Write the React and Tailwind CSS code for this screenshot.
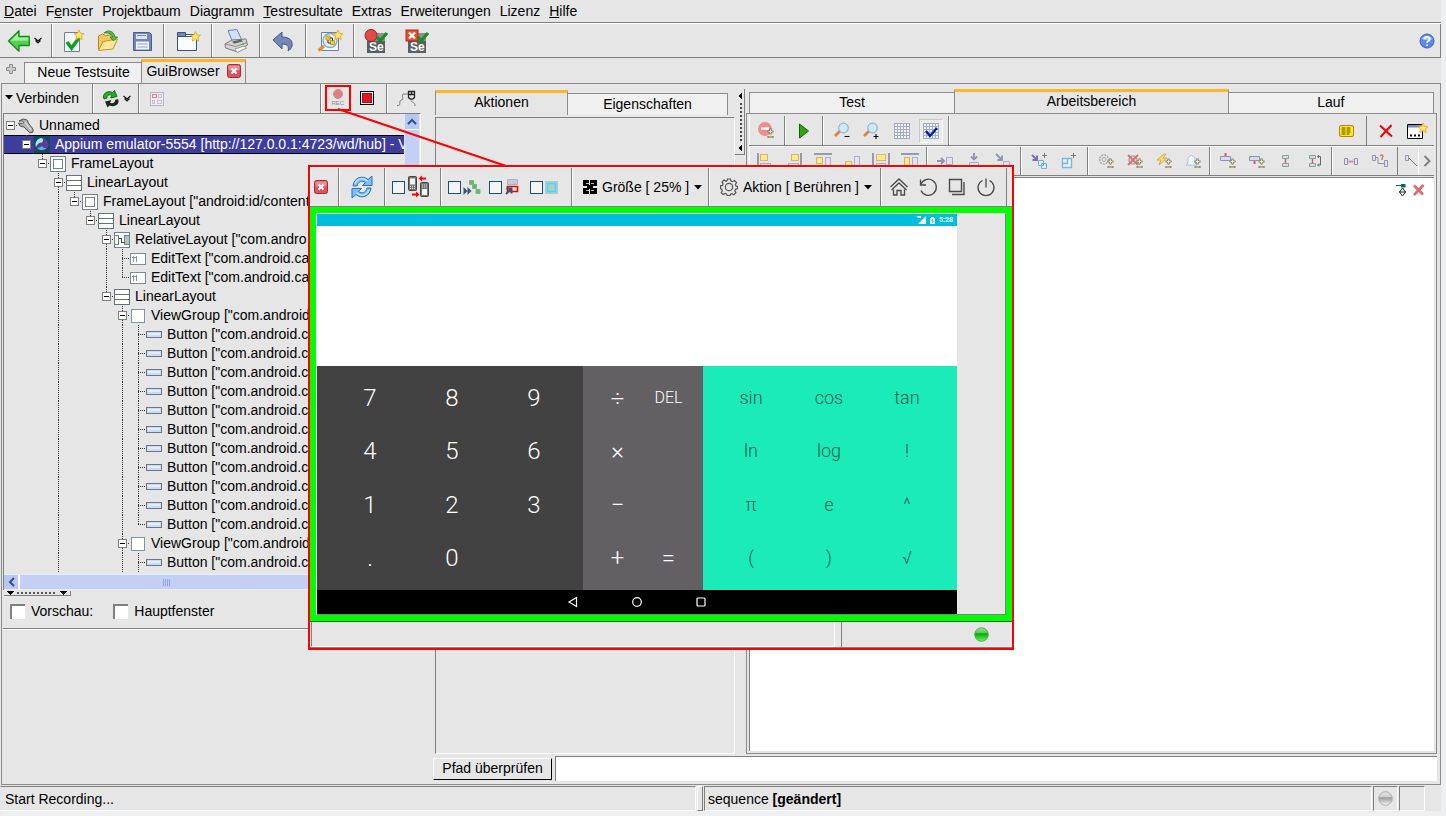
import React from "react";

/* ---------- drawing helpers ---------- */
function Svg({ w = 24, h = 24, children, crisp }) {
  return (
    <svg width={w} height={h} viewBox={`0 0 ${w} ${h}`} fill="none" className="block shrink-0" aria-hidden="true" shapeRendering={crisp ? "crispEdges" : "auto"}>
      {children}
    </svg>
  );
}

const starPoints = "0,-5 1.5,-1.7 5,-1.3 2.4,1 3.2,4.6 0,2.8 -3.2,4.6 -2.4,1 -5,-1.3 -1.5,-1.7";
const Star = ({ x, y }) => <polygon points={starPoints} transform={`translate(${x} ${y})`} fill="#ffe566" stroke="#d9a520" strokeWidth="0.8" />;
const PlusMinus = ({ x, y }) => (
  <g transform={`translate(${x} ${y})`}>
    <path d="M3.500 0.500v6M0.500 3.500h6M0.500 9h6" stroke="#77775c" strokeWidth="2.200" />
    <path d="M3.500 1.500v4M1.500 3.500h4M1.500 9h4" stroke="#f3e9a6" strokeWidth="1" />
  </g>
);
const Caret = () => (
  <Svg w={8} h={5}><path d="M0 0h8L4 4.500z" fill="#000" /></Svg>
);
const DoubleChevron = () => (
  <Svg w={8} h={8}><path d="M0.500 1L4 4l3.500-3M1.500 3.500L4 6l2.500-2.500" stroke="#111" strokeWidth="1.200" /></Svg>
);

/* ---------- main toolbar icons ---------- */
const BackIcon = () => (
  <Svg w={24}>
    <path d="M1.500 12L12 1.800V7.500h10.200v9H12v5.700z" fill="#4fd34f" stroke="#158a15" strokeWidth="1.300" strokeLinejoin="round" />
    <path d="M3.500 11.800L11 4.600v4h10.200v3z" fill="#a5f0a0" />
  </Svg>
);
const NewTestIcon = () => (
  <Svg w={24}>
    <path d="M3.500 3.500h15v19h-15z" fill="#f5f8ff" stroke="#6f80b0" />
    <path d="M6 13l4.500 6L18 9" stroke="#0aa31c" strokeWidth="3.600" />
    <Star x={18} y={6} />
  </Svg>
);
const OpenIcon = () => (
  <Svg w={24}>
    <path d="M2.500 20.500V7l4-2 3 1.500 8-1V11" fill="#f2c95c" stroke="#b98520" />
    <path d="M2.500 21.500L7 12.500l14.500-2.500-4.500 10z" fill="#ffe696" stroke="#c79324" />
    <path d="M8 4c4-4 10-2 11 4h2.500L17.500 12 14 8h2.500C16 5 13 3.500 8 4z" fill="#4fc24a" stroke="#1d7d1d" strokeWidth="0.800" />
  </Svg>
);
const SaveIcon = () => (
  <Svg w={24}>
    <path d="M2.500 3.500h16l2 2v16h-18z" fill="#7186bf" stroke="#4a5d96" />
    <path d="M5 5h11v5H5z" fill="#dfe6f6" />
    <path d="M6 6.500h9" stroke="#7186bf" />
    <path d="M5 12.500h13v8H5z" fill="#eef2fb" />
    <path d="M6.500 15h10M6.500 18h10" stroke="#93a3cd" />
  </Svg>
);
const NewWindowIcon = () => (
  <Svg w={26}>
    <path d="M2.500 5.500h19v16h-19z" fill="#fbfcff" stroke="#3d4f86" />
    <path d="M2.500 3.500h8v4h-8z" fill="#7186bf" stroke="#3d4f86" />
    <path d="M10 7.500h11.500" stroke="#3d4f86" />
    <Star x={20.500} y={7.500} />
  </Svg>
);
const PrinterIcon = () => (
  <Svg w={26}>
    <path d="M5 1.500l9-1 5 11-9 2.500z" fill="#cfe0ff" stroke="#6f80b0" />
    <path d="M2 15l7-4 14-1 1.500 6L13 22.500 2.500 19z" fill="#d4d4d4" stroke="#7b7b7b" />
    <path d="M2 15l11 2.500 11-4" stroke="#8d8d8d" />
    <path d="M9 12.500l9-2 2 2-9 2.300z" fill="#666" />
    <path d="M12 20l9-3 2.500 2L14 23.500z" fill="#f8f8f8" stroke="#999" />
    <circle cx="20" cy="15" r="1" fill="#3fbf3f" />
  </Svg>
);
const UndoIcon = () => (
  <Svg w={24}>
    <path d="M2 11L11 3v5c8 0 11 4 10 9-0.500 2-2 4-4 5 1.500-5-1-7-6-7v5z" fill="#7387b8" stroke="#45578c" strokeLinejoin="round" />
  </Svg>
);
const SearchDocIcon = () => (
  <Svg w={28} h={24}>
    <path d="M5.500 3.500h17v18h-17z" fill="#f2f6ff" stroke="#6f80b0" />
    <path d="M8 17l-5.500 4.500" stroke="#e58a2c" strokeWidth="3" />
    <circle cx="14" cy="11.500" r="7" fill="#e2f3ff" stroke="#7ea9d9" strokeWidth="1.400" />
    <path d="M10 7h4v4h-4zM14.500 11.500h4v4h-4z" fill="#ffcb1f" stroke="#c18900" strokeWidth="0.800" />
    <path d="M14 9h2.500v2.500M12 11v3h2.500" stroke="#333" />
    <Star x={22} y={6} />
  </Svg>
);
const SeIcon = ({ stop }) => (
  <Svg w={26}>
    <rect x="4" y="4" width="18" height="20" fill="#5c5f61" />
    <rect x="4" y="4" width="18" height="8" fill="#8c9194" />
    <text x="6" y="22" fontFamily="Liberation Sans, sans-serif" fontWeight="bold" fontSize="12" fill="#fff">Se</text>
    {stop ? (
      <g>
        <rect x="2" y="1" width="12" height="11" fill="#e6502f" stroke="#b32414" />
        <path d="M5 3.500l6 6M11 3.500l-6 6" stroke="#fff" strokeWidth="2.200" />
      </g>
    ) : (
      <circle cx="8" cy="6.500" r="6" fill="#e24a4a" stroke="#a81d1d" />
    )}
    <path d="M14 8l3 4 7-8" stroke="#158f22" strokeWidth="3" />
  </Svg>
);
const HelpIcon = () => (
  <Svg w={16} h={16}>
    <circle cx="8" cy="8" r="7" fill="#5b8bea" stroke="#3b64c4" />
    <path d="M2.500 6a6 5 0 0 1 11 0q-5.500 2-11 0z" fill="#a5c3fa" />
    <path d="M5.500 6.200a2.500 2.300 0 1 1 3.700 1.900Q8 8.700 8 10M8 11.500v1.600" stroke="#fff" strokeWidth="1.700" />
  </Svg>
);
const CloseIcon = () => (
  <Svg w={14} h={14}>
    <rect x="0.500" y="0.500" width="13" height="13" rx="2" fill="#d9525c" stroke="#b02a36" />
    <rect x="1.500" y="1.500" width="11" height="5" rx="1" fill="#ec8f95" />
    <path d="M4.500 4.500l5 5M9.500 4.500l-5 5" stroke="#fff" strokeWidth="2.200" />
  </Svg>
);

/* ---------- browser toolbar icons ---------- */
const RefreshGreen = () => (
  <Svg w={18} h={18}>
    <path d="M2 9C-0.500 3.500 6 0 10.500 2.500L12.500 0.500 15 6.500 8.500 8 10 5.300C7.500 4 4.500 5.500 5 8z" fill="#1fb51f" stroke="#064d06" strokeWidth="0.800" />
    <path d="M16 9C18.500 14.500 12 18 7.500 15.500L5.500 17.500 3 11.500 9.500 10 8 12.700C10.500 14 13.500 12.500 13 10z" fill="#1b2b1b" />
  </Svg>
);
const ComponentGrid = () => (
  <Svg w={14} h={14} crisp>
    <path d="M0.500 0.500h13v13H0.500z" fill="#f0ecf2" stroke="#b9b4cc" />
    <path d="M2.500 2.500h4v3h-4z" stroke="#ee7c7c" />
    <path d="M8.500 2.500h3v3h-3zM2.500 8.500h2v3h-2zM7.500 8.500h4v3h-4z" stroke="#c9bfd6" />
  </Svg>
);
const RecIcon = () => (
  <Svg w={20} h={20}>
    <circle cx="10" cy="6" r="4.500" fill="#e77c7c" stroke="#bb9a9a" />
    <text x="3.500" y="17" fontFamily="Liberation Sans, sans-serif" fontSize="6" fill="#888">REC</text>
  </Svg>
);
const StopIcon = () => (
  <Svg w={14} h={14} crisp>
    <path d="M0.500 0.500h13v13H0.500z" fill="#fff" stroke="#000" />
    <path d="M2 2h10v10H2z" fill="#b00a14" />
    <path d="M3 3h8v8H3z" fill="#e5141e" />
  </Svg>
);
const MouseIcon = () => (
  <Svg w={22} h={18}>
    <path d="M1 15.500c5 1 1-5 4.500-5.500S4 4 8 4h4" stroke="#777" />
    <path d="M12.500 1.500h6v6q-3 3.500-6 0zM12.500 4.500h6M15.500 1.500v3" stroke="#222" strokeWidth="1.300" />
    <path d="M15.500 9.500c-2 3 4 2 3.500 6.500" stroke="#777" />
  </Svg>
);

/* ---------- tree icons ---------- */
const treeIcons = {
  wrench: (
    <Svg w={16} h={16}>
      <path d="M1 3l4-2 4 1 2 4 4 5v3l-3 1-6-6-4-1-1.500-3 4 0.500L6 4.500 4.500 3z" fill="#b4b4b4" stroke="#444" strokeWidth="0.900" />
      <path d="M7 4l6 8" stroke="#eee" />
    </Svg>
  ),
  appium: (
    <Svg w={16} h={17}>
      <path d="M0 0h16v17H0z" fill="#114a58" />
      <circle cx="8" cy="8.500" r="6.500" fill="#5b3aa0" />
      <path d="M8 2A6.500 6.500 0 0 0 2 11q2-5 6-4.500 2-2 0-4.500z" fill="#9ef0f0" />
      <path d="M3 12a6.500 6.500 0 0 0 10-0.500q-4 1.500-5-1.500-2 2-5 2z" fill="#42c6d6" />
    </Svg>
  ),
  frame: (
    <Svg w={16} h={16} crisp>
      <path d="M0.500 0.500h15v15H0.500z" fill="#fffffa" stroke="#6f8390" />
      <path d="M3.500 3.500h9v9h-9z" stroke="#6f8390" />
    </Svg>
  ),
  linear: (
    <Svg w={16} h={16} crisp>
      <path d="M0.500 0.500h15v15H0.500zM0 5.500h16M0 10.500h16" fill="#fffffa" stroke="#5f7480" />
    </Svg>
  ),
  relative: (
    <Svg w={16} h={16} crisp>
      <path d="M0.500 0.500h15v15H0.500z" fill="#fffffa" stroke="#6f8390" />
      <path d="M0.500 3.500h4v9h-4z" stroke="#6f8390" fill="#f5f5e8" />
      <path d="M10.500 3.500h5v9h-5z" fill="#b8bfc2" stroke="#6f8390" />
      <path d="M5 6.500h2.500v4h3" stroke="#444" />
    </Svg>
  ),
  edit: (
    <Svg w={16} h={12} crisp>
      <path d="M0.500 0.500h15v11H0.500z" fill="#fff" stroke="#7b8c98" />
      <path d="M3.500 3v6M2 4.500h4M6.500 3v6" stroke="#8896a0" />
    </Svg>
  ),
  group: (
    <Svg w={16} h={14} crisp><path d="M1.500 0.500h13v13h-13z" fill="#fffffa" stroke="#7c94a4" /></Svg>
  ),
  button: (
    <Svg w={16} h={7} crisp>
      <path d="M0.500 0.500h15v6H0.500z" fill="#cbdcf2" stroke="#6a7684" />
      <path d="M2 2h12v2H2z" fill="#e4eefb" />
    </Svg>
  ),
};

const buttonRow = [8, "button", 'Button ["com.android.c', false, true, [3, 7]];
/* depth, icon, label, has children, has next sibling, guide columns */
const rows = [
  [0, "wrench", "Unnamed", true, false, []],
  [1, "appium", "Appium emulator-5554 [http://127.0.0.1:4723/wd/hub] - V", true, false, []],
  [2, "frame", "FrameLayout", true, false, []],
  [3, "linear", "LinearLayout", true, true, []],
  [4, "frame", 'FrameLayout ["android:id/content', true, false, [3]],
  [5, "linear", "LinearLayout", true, false, [3]],
  [6, "relative", 'RelativeLayout ["com.andro', true, true, [3]],
  [7, "edit", 'EditText ["com.android.ca', false, true, [3, 6]],
  [7, "edit", 'EditText ["com.android.ca', false, false, [3, 6]],
  [6, "linear", "LinearLayout", true, false, [3]],
  [7, "group", 'ViewGroup ["com.android', true, true, [3]],
  ...Array(10).fill(buttonRow),
  [8, "button", 'Button ["com.android.c', false, false, [3, 7]],
  [7, "group", 'ViewGroup ["com.android', true, true, [3]],
  buttonRow,
];

function TreeRow({ row, selected, index }) {
  const [depth, icon, label, open, next, guides] = row;
  const joint = (
    <Svg w={14} h={19} crisp>
      {depth > 0 && <path d="M6.500 0v10" stroke="#333" strokeDasharray="1 1" />}
      {next && <path d="M6.500 10v9" stroke="#333" strokeDasharray="1 1" />}
      <path d="M6 9.500h8" stroke="#333" strokeDasharray="1 1" />
      {open && <path d="M2.500 5.500h8v8h-8z" fill="#fff" stroke="#808080" />}
      {open && <path d="M4 9.500h5" stroke="#000" />}
    </Svg>
  );
  return (
    <li
      role="treeitem"
      aria-level={depth + 1}
      aria-selected={selected}
      className={"flex h-[19px] items-center whitespace-nowrap " + (selected ? "border-y border-black bg-[#3e3d9d] text-white" : "")}
    >
      {Array.from({ length: depth }, (_, l) => (
        <Svg key={l} w={16} h={19} crisp>
          {guides.includes(l) && <path d="M6.500 0v19" stroke="#333" strokeDasharray="1 1" />}
        </Svg>
      ))}
      {open ? <button aria-label={"Zuklappen " + index} className="shrink-0">{joint}</button> : joint}
      <span className="flex w-4 shrink-0 justify-center">{treeIcons[icon]}</span>
      <span className="pb-[2px] pl-[5px]">{label}</span>
    </li>
  );
}

/* ---------- workspace toolbar icons ---------- */
const MinusIcon = () => (
  <Svg w={20} h={20}>
    <circle cx="8" cy="8" r="7" fill="#f08d8d" />
    <path d="M4 7.500h8" stroke="#fff" strokeWidth="2.500" />
    <PlusMinus x={10} y={7} />
  </Svg>
);
const PlayIcon = () => (
  <Svg w={12} h={16}><path d="M1.500 1l9 7-9 7z" fill="#2fa80f" stroke="#175e08" /></Svg>
);
const ZoomIcon = ({ plus }) => (
  <Svg w={18} h={18}>
    <path d="M8 8l-6 6" stroke="#e0843a" strokeWidth="2.800" />
    <circle cx="10.500" cy="6" r="4.800" fill="#cdeafc" stroke="#8fb6d8" strokeWidth="1.200" />
    <path d={plus ? "M11.500 14.500h5M14 12v5" : "M11.500 14.500h5"} stroke="#000" strokeWidth="1.100" />
  </Svg>
);
const GridIcon = ({ check }) => (
  <Svg w={18} h={18} crisp={!check}>
    <path d="M1 1h16v16H1z" fill="#f4f6ff" />
    <path d="M1.500 1v16M4.500 1v16M7.500 1v16M10.500 1v16M13.500 1v16M16.500 1v16M1 1.500h16M1 4.500h16M1 7.500h16M1 10.500h16M1 13.500h16M1 16.500h16" stroke="#a3aacf" />
    {check && <path d="M4 9l4 5 7-8" stroke="#0b1f9c" strokeWidth="2.400" />}
  </Svg>
);
const NoteIcon = () => (
  <Svg w={15} h={12}>
    <rect x="0.500" y="0.500" width="14" height="11" rx="1.500" fill="#ffec1f" stroke="#c97a1a" />
    <path d="M2.500 3h10M2.500 5h10M2.500 7h10M2.500 9h8" stroke="#5a4f00" strokeDasharray="4 1" />
  </Svg>
);
const RedX = ({ soft }) => (
  <Svg w={14} h={14}><path d={soft ? "M2 2.500l9 9M11.500 2L2 12" : "M1 1.500l12 11M12.500 1L1.500 13"} stroke={soft ? "#e06b6b" : "#f00000"} strokeWidth={soft ? 2.600 : 2} /></Svg>
);
const DialogStarIcon = () => (
  <Svg w={22} h={18}>
    <path d="M1.500 2.500h15v14h-15z" fill="#fff" stroke="#000" />
    <path d="M2 3h14v2.500H2z" fill="#7488bd" />
    <path d="M4 13.500h2M8 13.500h2M12 13.500h2" stroke="#000" strokeWidth="2" />
    <Star x={17} y={6} />
  </Svg>
);
const Align = ({ d, y, b }) => (
  <Svg w={18} h={16} crisp>
    <path d={b} fill="#dfe3f2" stroke="#aab0cc" />
    <path d={y} fill="#ffe98a" stroke="#d9b36a" />
    <path d={d} stroke="#9898b0" strokeWidth="2" />
  </Svg>
);
const alignIcons = [
  <Align d="M2 0v16" y="M4.500 1.500h7v6h-7z" b="M4.500 10.500h10v4h-10z" />,
  <Align d="M16 0v16" y="M6.500 1.500h7v6h-7z" b="M3.500 10.500h10v4h-10z" />,
  <Align d="M0 1h18" y="M2.500 4.500h6v6h-6z" b="M11.500 4.500h5v11h-5z" />,
  <Align d="M0 16h18" y="M2.500 8.500h6v6h-6z" b="M11.500 3.500h5v11h-5z" />,
  <Align d="M1 0v16M17 0v16" y="M4.500 1.500h9v6h-9z" b="M4.500 10.500h9v4h-9z" />,
  <Align d="M0 1h18" y="M3.500 4.500h5v11h-5z" b="M11.500 4.500h5v11h-5z" />,
];
const Line = ({ children }) => <Svg w={20} h={18}>{children}</Svg>;
const moveIcons = [
  <Line><path d="M2 9h7M6 6l3 3-3 3" stroke="#8f93ad" strokeWidth="1.800" /><path d="M11.500 5.500h6v7h-6z" fill="#dfe3f2" stroke="#a3abc9" /></Line>,
  <Line><path d="M10 1v6M7 4.500l3 3 3-3" stroke="#8f93ad" strokeWidth="1.800" /><path d="M5.500 10.500h9v5h-9z" fill="#dfe3f2" stroke="#a3abc9" /></Line>,
  <Line><path d="M3 2l6 6M9 3.500V8H4.500" stroke="#8f93ad" strokeWidth="1.800" /><path d="M10.500 9.500h6v6h-6z" fill="#dfe3f2" stroke="#a3abc9" /></Line>,
];
const sizeIcons = [
  <Line><path d="M2 3l5 5M7 3.500V8H2.500" stroke="#7a6fc0" strokeWidth="2" /><path d="M8.500 8.500h5v5h-5zM11.500 11.500h5v5h-5z" fill="#dff0ff" stroke="#6faee0" /><path d="M14.500 1v5M12 3.500h5" stroke="#777" /></Line>,
  <Line><path d="M3.500 6.500h9v9h-9zM3.500 11.500h5v-5" fill="#e8f4ff" stroke="#7db4e2" strokeWidth="1.400" /><path d="M14.500 1v5M12 3.500h5" stroke="#777" /></Line>,
];
const createIcons = [
  <Line><circle cx="8" cy="7.500" r="4.500" stroke="#a9a9a9" strokeWidth="1.500" strokeDasharray="2 1" /><circle cx="8" cy="7.500" r="2" stroke="#a9a9a9" /><PlusMinus x={11} y={6} /></Line>,
  <Line><circle cx="8" cy="8" r="4" stroke="#b5a5a5" strokeWidth="1.500" /><path d="M3 3l10 10M13 3L3 13" stroke="#d96f78" strokeWidth="2" /><PlusMinus x={11} y={6} /></Line>,
  <Line><path d="M10 2L3 8h4l-2 5 8-7H9l3-4z" fill="#ffe277" stroke="#d7a84d" /><PlusMinus x={11} y={6} /></Line>,
  <Line><path d="M5 11V6q3.500-5 7 0v5l2 2H3z" fill="#f2f8ff" stroke="#a6c4e2" /><PlusMinus x={11} y={6} /></Line>,
];
const nodeIcons = [
  <Line><path d="M2.500 4.500h10v4h-10z" fill="#d8dcee" stroke="#8f93ad" /><path d="M7.500 1v3" stroke="#e05a6a" strokeWidth="2" /><PlusMinus x={11} y={6} /></Line>,
  <Line><path d="M2.500 4.500h10v4h-10z" fill="#d8dcee" stroke="#8f93ad" /><path d="M7.500 9v3" stroke="#e05a6a" strokeWidth="2" /><PlusMinus x={11} y={6} /></Line>,
  <Line><path d="M6.500 3.500h6v3h-6zM6.500 11.500h6v3h-6z" fill="#cfe0de" stroke="#86a09c" /><path d="M9.500 7v4" stroke="#e05a6a" strokeWidth="1.500" /></Line>,
  <Line><path d="M4.500 3.500h6v3h-6zM4.500 11.500h6v3h-6z" fill="#cfe0de" stroke="#86a09c" /><path d="M7.500 7v4" stroke="#e05a6a" strokeWidth="1.500" /><path d="M13 4.500h2.500v8.500H13M14 3l-1.500 1.500L14 6M14 11.500L12.500 13l1.500 1.500" stroke="#666" /></Line>,
];
const linkIcons = [
  <Line><path d="M3.500 6.500h3v6h-3zM13.500 6.500h3v6h-3z" fill="#dfe3f2" stroke="#8f93ad" /><path d="M8 7.500l4 4M12 7.500l-4 4M7 9.500h6" stroke="#e08a93" /></Line>,
  <Line><path d="M2.500 3.500h3v5h-3zM14.500 8.500h3v6h-3z" fill="#dfe3f2" stroke="#8f93ad" /><path d="M6 5.500h2v6h6" stroke="#8f93ad" /><path d="M10 4q3-2.500 3 0.500l-1 2v1.500" stroke="#dd6a78" strokeWidth="1.300" /></Line>,
];

/* ---------- device window icons ---------- */
const RefreshBlue = () => (
  <Svg w={24} h={24}>
    <path d="M3 11C4 2 13 0 18 4.500l4-3.500V10.500h-9.500l3-3C12 5 8 6.500 7 11z" fill="#7cc0f5" stroke="#2671c4" strokeLinejoin="round" />
    <path d="M21 13c-1 9-10 11-15 6.500L2 23V13.500h9.500l-3 3c3.500 2.500 7.500 1 8.500-3.500z" fill="#7cc0f5" stroke="#2671c4" strokeLinejoin="round" />
    <path d="M5 9C7 3.500 13 2 17.500 6M19 15c-2 5.500-8 7-12.500 3" stroke="#c4e6ff" strokeWidth="1.200" />
  </Svg>
);
const PhonesIcon = () => (
  <Svg w={24} h={24}>
    <rect x="1.500" y="1.500" width="8" height="14" rx="1" fill="#777" stroke="#444" /><path d="M3 3.500h5v6H3z" fill="#f4f4f4" />
    <path d="M3 11.500h5M3 13.500h5" stroke="#ddd" strokeDasharray="1 1" />
    <rect x="13.500" y="7.500" width="8" height="14" rx="1" fill="#777" stroke="#444" /><path d="M15 14h5v6h-5z" fill="#f4f4f4" />
    <path d="M15 10h5M15 12h5" stroke="#ddd" strokeDasharray="1 1" />
    <path d="M19 3.500h-6" stroke="#f00" strokeWidth="2" /><path d="M15 0.500v6L11.500 3.500z" fill="#f00" />
    <path d="M5 19.500h5" stroke="#f00" strokeWidth="2" /><path d="M9 16.500v6l3.500-3z" fill="#f00" />
  </Svg>
);
const ExpandIcon = () => (
  <Svg w={18} h={18}>
    <path d="M6.500 2.500h4v4h-4zM9.500 6.500h4v4h-4zM13 11.500h4v4h-4z" fill="#3fd33f" stroke="#8fa5a0" />
    <path d="M0.500 9l4 4-4 4zM4.500 9l4 4-4 4z" fill="#38566e" />
  </Svg>
);
const PickIcon = () => (
  <Svg w={14} h={16}>
    <path d="M2.500 0.500h10v5h-10z" fill="#c5cbd6" stroke="#aab4d0" />
    <path d="M2.500 7.500h10v5h-10z" stroke="#f00" strokeWidth="1.600" />
    <path d="M1 15l5-5M1.500 9.500H6.500v5" stroke="#38566e" strokeWidth="2" />
  </Svg>
);
const HighlightIcon = () => (
  <Svg w={13} h={13}>
    <rect width="13" height="13" fill="#c3c3c3" />
    <rect x="2.500" y="2.500" width="8" height="8" stroke="#10f0ff" strokeWidth="1.500" />
  </Svg>
);
const SizeIcon = () => (
  <Svg w={14} h={14} crisp>
    <path d="M0 0h6v6H0zM7 0h7v6H7zM0 8h6v6H0zM7 8h7v6H7zM4 5h6v4H4z" fill="#000" />
    <path d="M3 3.500h3M8 3.500h3M3 10.500h3M8 10.500h3" stroke="#bbb" />
  </Svg>
);
const GearIcon = () => (
  <Svg w={18} h={18}>
    <path d="M7.500 1h3l0.500 2 1.600 0.700 1.900-1.100 2 2-1.100 1.900L16 8l1.500 0.300v2.400l-2 0.500-0.700 1.600 1.100 1.900-2 2-1.900-1.100-1.500 0.700-0.400 1.200h-3l-0.500-1.400-1.500-0.600-1.900 1.100-2-2 1.100-1.900-0.700-1.500L0.500 10.500V7.800L2.500 7.400l0.600-1.500L2 4.100l2-2 1.900 1.100L7.200 2.600z" stroke="#555" strokeWidth="1.200" />
    <circle cx="9" cy="9" r="3.700" stroke="#555" strokeWidth="1.200" />
  </Svg>
);
const HomeIcon = () => (
  <Svg w={20} h={20}>
    <path d="M1.500 10L10 2l8.500 8M2.500 13L10 6l7.500 7M4.500 12.500V18H8v-4.500h4V18h3.500v-5.500" stroke="#4a4a4a" strokeWidth="1.300" />
  </Svg>
);
const RotateIcon = () => (
  <Svg w={20} h={20}><path d="M2.500 2.500v5.500h5.500M2.800 7.500A8 8 0 1 1 3 13.500" stroke="#4a4a4a" strokeWidth="1.300" /></Svg>
);
const RecentIcon = () => (
  <Svg w={20} h={20}><path d="M2.500 2.500h12v12h-12zM17 5v12.500H5" stroke="#4a4a4a" strokeWidth="1.400" /></Svg>
);
const PowerIcon = () => (
  <Svg w={20} h={20}><path d="M10 1.500v9M6.500 3.500a8 8 0 1 0 7 0" stroke="#4a4a4a" strokeWidth="1.300" /></Svg>
);
const Bulb = ({ green }) => (
  <Svg w={15} h={15}>
    <defs>
      <linearGradient id={green ? "bulb-green" : "bulb-gray"} x1="0" y1="0" x2="0" y2="1">
        <stop offset="0" stopColor={green ? "#8fe88f" : "#e8e8e8"} />
        <stop offset="0.350" stopColor={green ? "#55cf55" : "#cfcfcf"} />
        <stop offset="0.450" stopColor={green ? "#08a808" : "#9c9c9c"} />
        <stop offset="1" stopColor={green ? "#5cff5c" : "#f6f6f6"} />
      </linearGradient>
    </defs>
    <circle cx="7.500" cy="7.500" r="6.800" fill={green ? "url(#bulb-green)" : "url(#bulb-gray)"} stroke={green ? "#4a9a4a" : "#a5a5a5"} strokeWidth="0.800" />
  </Svg>
);

/* ---------- shared controls ---------- */
const IconButton = ({ label, className = "w-[35px]", children }) => (
  <button aria-label={label} className={"flex h-full shrink-0 items-center justify-center " + className}>{children}</button>
);
const Group = ({ className = "", children }) => (
  <div className={"flex shrink-0 items-center border-l border-r border-l-white border-r-[#808080] " + className}>{children}</div>
);
const UpperTab = ({ active, className = "", children }) => (
  <button
    role="tab"
    aria-selected={!!active}
    className={
      "border-x border-[#8c8c8c] text-center " +
      (active ? "h-[25px] border-t-3 border-t-[#fdb52d] bg-[#e6e6e6] pb-1 " : "h-[22px] border-y bg-[#f0f0f0] pb-[2px] ") + className
    }
  >
    {children}
  </button>
);
const SmallCheck = ({ label }) => (
  <input type="checkbox" aria-label={label} className="h-[13px] w-[13px] shrink-0 appearance-none border border-[#1c4d7c] bg-[#f4f4f2]" />
);

const menus = [["", "D", "atei"], ["F", "e", "nster"], ["Projektbaum", "", ""], ["Diagramm", "", ""], ["", "T", "estresultate"], ["Extras", "", ""], ["Erweiterungen", "", ""], ["Lizenz", "", ""], ["", "H", "ilfe"]];

/* ---------- device window ---------- */
const Key = ({ children, className = "" }) => (
  <button className={"flex items-center justify-center " + className}>{children}</button>
);

function DeviceWindow() {
  return (
    <section aria-label="Aufnahmefenster" className="absolute top-[165px] left-[308px] w-[706px] border-2 border-[#ff0000] bg-[#e6e6e6]">
      <div className="flex h-10 border-t border-b border-t-white border-b-[#808080]">
        <Group className="w-[29px] justify-center pr-2"><IconButton label="Schließen" className="w-5"><CloseIcon /></IconButton></Group>
        <Group className="w-[46px] justify-center"><IconButton label="Aktualisieren" className="w-8"><RefreshBlue /></IconButton></Group>
        <Group className="w-14 gap-[2px] pl-[6px]"><SmallCheck label="Automatisch aktualisieren" /><PhonesIcon /></Group>
        <Group className="w-[131px] pl-[6px]">
          <div className="flex w-[42px] items-center gap-[2px]"><SmallCheck label="Aufklappen" /><ExpandIcon /></div>
          <div className="flex w-[42px] items-center gap-[3px]"><SmallCheck label="Auswählen" /><PickIcon /></div>
          <div className="flex w-[42px] items-center gap-[2px]"><SmallCheck label="Hervorheben" /><HighlightIcon /></div>
        </Group>
        <Group className="w-[137px]">
          <button className="flex h-full w-full items-center gap-[5px] pl-[10px] whitespace-nowrap"><SizeIcon />Größe [ 25% ]<Caret /></button>
        </Group>
        <Group className="w-[172px]">
          <button className="flex h-full w-full items-center gap-[5px] pl-[10px] whitespace-nowrap"><GearIcon />Aktion [ Berühren ]<Caret /></button>
        </Group>
        <Group className="w-[126px] pl-[2px]">
          <IconButton label="Home" className="w-[29px]"><HomeIcon /></IconButton>
          <IconButton label="Zurück" className="w-[29px]"><RotateIcon /></IconButton>
          <IconButton label="Übersicht" className="w-[29px]"><RecentIcon /></IconButton>
          <IconButton label="Ein/Aus" className="w-[29px]"><PowerIcon /></IconButton>
        </Group>
      </div>
      <div className="border-6 border-[#00ff00]">
        <div className="flex border border-white border-r-[#808080] border-b-[#808080]">
          <div className="w-[640px] font-[Roboto,sans-serif]">
            <div className="flex h-3 items-center justify-end gap-1 bg-[#00bfdc] pr-1 text-[7px] leading-none font-bold text-white">
              <Svg w={9} h={8}><path d="M0 0h4v2H1M9 0v8H1z" fill="#fff" /></Svg>
              <Svg w={5} h={7}><path d="M0 1h1V0h3v1h1v6H0z" fill="#fff" /><path d="M3 2L1.500 4h2L2 6" stroke="#00bfdc" strokeWidth="0.800" /></Svg>
              <span>5:28</span>
            </div>
            <div className="h-[140px] bg-white" />
            <div className="flex h-56 font-light text-white">
              <div className="grid w-[266px] grid-cols-3 grid-rows-4 bg-[#424242] py-[5px] pr-2 pl-3 text-2xl leading-6">
                {["7", "8", "9", "4", "5", "6", "1", "2", "3", ".", "0"].map((k) => <Key key={k}>{k}</Key>)}
              </div>
              <div className="grid w-[120px] grid-cols-2 grid-rows-4 bg-[#636063] px-[9px] py-[5px] text-2xl leading-6">
                <Key>÷</Key><Key className="text-base">DEL</Key>
                <Key>×</Key><span />
                <Key>−</Key><span />
                <Key>+</Key><Key>=</Key>
              </div>
              <div className="grid w-[254px] grid-cols-3 grid-rows-4 bg-[#1aebb9] py-[5px] pr-[11px] pl-[9px] text-lg leading-6 text-[#0b5f4e]">
                {["sin", "cos", "tan", "ln", "log", "!", "π", "e", "^", "(", ")", "√"].map((k) => <Key key={k}>{k}</Key>)}
              </div>
            </div>
            <div className="flex h-6 items-center justify-center gap-[52px] bg-black">
              <button aria-label="Zurück-Taste"><Svg w={12} h={12}><path d="M9.500 1.500v9L2 6z" stroke="#fff" strokeWidth="1.200" /></Svg></button>
              <button aria-label="Home-Taste"><Svg w={12} h={12}><circle cx="6" cy="6" r="4.300" stroke="#fff" strokeWidth="1.200" /></Svg></button>
              <button aria-label="Übersicht-Taste"><Svg w={12} h={12}><rect x="2" y="2" width="8" height="8" rx="1" stroke="#fff" strokeWidth="1.200" /></Svg></button>
            </div>
          </div>
        </div>
      </div>
      <div className="flex h-[27px] gap-[6px] border-t border-b border-t-[#2b6a2b] border-b-[#808080] pl-px">
        <div className="flex-1 border-r border-b border-l border-white border-l-[#808080]" />
        <div className="flex w-[171px] items-center justify-end border-l border-[#808080] pr-[23px]"><Bulb green /></div>
      </div>
    </section>
  );
}

/* ---------- panels ---------- */
function BrowserPanel() {
  return (
    <div className="flex w-[419px] shrink-0 flex-col pl-px">
      <div className="flex h-[29px] shrink-0">
        <Group className="w-[90px] border-l-0"><button className="flex h-full items-center gap-[3px] pb-[2px] pl-[2px]"><Caret />Verbinden</button></Group>
        <Group className="w-[46px] gap-[2px] pl-[7px]"><IconButton label="Komponenten aktualisieren" className="w-5"><RefreshGreen /></IconButton><DoubleChevron /></Group>
        <div className="flex flex-1 items-center border-r border-l border-r-[#808080] border-l-white pl-[3px]"><IconButton label="Komponenten wählen" className="w-7"><ComponentGrid /></IconButton></div>
        <div className="flex w-[66px] items-center gap-[5px] border-r border-l border-r-[#808080] border-l-white pb-px pl-[3px]">
          <button aria-label="Aufnahme starten" className="flex h-[26px] w-[26px] items-center justify-center border-2 border-[#ff0000]"><RecIcon /></button>
          <IconButton label="Aufnahme stoppen" className="w-[22px]"><StopIcon /></IconButton>
        </div>
        <div className="flex w-[34px] items-center justify-center border-l border-white pl-1"><IconButton label="Mausereignisse" className="w-6"><MouseIcon /></IconButton></div>
      </div>
      <div className="border-t border-r border-l border-[#808080] border-r-white">
        <div className="flex">
          <ul role="tree" className="min-w-0 flex-1 overflow-hidden py-[2px]">
            {rows.map((r, i) => <TreeRow key={i} row={r} index={i} selected={i === 1} />)}
          </ul>
          <div className="w-4 border-x border-[#dfe6fb] bg-[#c3cff5]">
            <button aria-label="Nach oben" className="flex h-4 w-full items-center justify-center border-b border-white bg-[#b8c8f5]">
              <Svg w={10} h={7}><path d="M1 6l4-4 4 4" stroke="#33507a" strokeWidth="2" /></Svg>
            </button>
          </div>
        </div>
        <div className="flex h-4 items-center border-y border-[#e9eefb] bg-[#c3cff5]">
          <button aria-label="Nach links" className="flex h-full w-4 items-center justify-center border-r-2 border-white bg-[#b8c8f5]">
            <Svg w={7} h={10}><path d="M6 1L2 5l4 4" stroke="#33507a" strokeWidth="2" /></Svg>
          </button>
          <div className="flex flex-1 pl-[143px]"><Svg w={8} h={7} crisp><path d="M0.500 0v7M2.500 0v7M4.500 0v7M6.500 0v7" stroke="#8fa5e6" /></Svg></div>
        </div>
      </div>
      <div className="h-[6px]">
        <Svg w={68} h={6} crisp>
          <path d="M1 5.500h66V1" stroke="#808080" />
          <path d="M3 1h8L7 5zM56 1h8l-4 4z" fill="#000" />
          <path d="M14 3h40" stroke="#555" strokeWidth="2" strokeDasharray="2 2" />
        </Svg>
      </div>
      <div className="flex h-[33px] items-center gap-5 border-b border-[#808080] pb-[2px] pl-[7px]">
        <label className="flex items-center gap-[6px]"><input type="checkbox" className="h-[15px] w-[15px] appearance-none border-t-2 border-l-2 border-[#808080] bg-white" />Vorschau:</label>
        <label className="flex items-center gap-[6px]"><input type="checkbox" className="h-[15px] w-[15px] appearance-none border-t-2 border-l-2 border-[#808080] bg-white" />Hauptfenster</label>
      </div>
      <div className="flex-1 border-t border-white" />
    </div>
  );
}

function ActionPanel() {
  return (
    <div className="ml-[14px] flex w-[300px] shrink-0 flex-col pt-[6px]">
      <div role="tablist" className="flex items-end">
        <UpperTab active className="-mr-px w-[133px]">Aktionen</UpperTab>
        <UpperTab className="w-[161px] border-b-0">Eigenschaften</UpperTab>
      </div>
      <div className="mt-[2px] flex-1 border border-white border-t-[#808080] border-l-[#808080]" />
    </div>
  );
}

function ToolRow({ icons, className, name }) {
  return (
    <Group className={className}>
      {icons.map((icon, i) => <IconButton key={i} label={name + " " + (i + 1)} className="w-[29px]">{icon}</IconButton>)}
    </Group>
  );
}

function Workspace() {
  return (
    <div className="mr-[3px] ml-px flex min-w-0 flex-1 flex-col pt-[5px]">
      <div role="tablist" className="mx-[3px] flex items-end">
        <UpperTab className="flex-3">Test</UpperTab>
        <UpperTab active className="-mr-px -ml-px flex-4">Arbeitsbereich</UpperTab>
        <UpperTab className="flex-3">Lauf</UpperTab>
      </div>
      <div className="-mt-px flex flex-1 flex-col border border-[#8c8c8c] p-[2px]">
        <div className="flex h-[30px] border-b border-b-[#808080]">
          <Group className="w-[36px] justify-center"><IconButton label="Entfernen" className="w-7"><MinusIcon /></IconButton></Group>
          <Group className="w-[38px] justify-center"><IconButton label="Start" className="w-7"><PlayIcon /></IconButton></Group>
          <Group className="w-[126px] gap-[1px] pl-1">
            <IconButton label="Verkleinern" className="w-7"><ZoomIcon /></IconButton>
            <IconButton label="Vergrößern" className="w-7"><ZoomIcon plus /></IconButton>
            <IconButton label="Raster" className="w-8"><GridIcon /></IconButton>
            <button aria-label="Am Raster ausrichten" className="flex h-6 w-6 items-center justify-center border border-[#c8c8c8] border-r-white border-b-white bg-[#ececec]"><GridIcon check /></button>
          </Group>
          <div className="flex flex-1 items-center justify-end border-x border-r-[#808080] border-l-white pr-1"><IconButton label="Notiz" className="w-8"><NoteIcon /></IconButton></div>
          <div className="flex w-[67px] items-center gap-[1px] pl-[5px]">
            <IconButton label="Löschen" className="w-7"><RedX /></IconButton>
            <IconButton label="Neuer Dialog" className="w-8"><DialogStarIcon /></IconButton>
          </div>
        </div>
        <div className="flex h-[30px] overflow-hidden border-t border-b border-t-white border-b-[#808080]">
          <ToolRow name="Ausrichten" icons={alignIcons} className="w-[178px]" />
          <ToolRow name="Bewegen" icons={moveIcons} className="w-[94px] justify-center" />
          <ToolRow name="Größe" icons={sizeIcons} className="w-[67px] justify-center" />
          <ToolRow name="Erzeugen" icons={createIcons} className="w-[122px] justify-center" />
          <ToolRow name="Knoten" icons={nodeIcons} className="w-[122px] justify-center" />
          <ToolRow name="Verbindung" icons={linkIcons} className="w-[66px] justify-center" />
          <div className="flex min-w-0 flex-1 items-center justify-end">
            <Svg w={14} h={18}><path d="M1.500 3.500h3v5h-3z" fill="#dfe3f2" stroke="#8f93ad" /><path d="M5 6l8 8" stroke="#777" /></Svg>
            <button aria-label="Mehr" className="flex h-full w-4 items-center justify-center border-l border-white"><Svg w={8} h={12}><path d="M1.500 1l5 5-5 5" stroke="#808080" strokeWidth="2" /></Svg></button>
          </div>
        </div>
        <div className="mt-px flex flex-1 items-start justify-end gap-[5px] border-t border-l border-[#808080] bg-white pt-[5px] pr-[8px]">
          <Svg w={11} h={14}>
            <path d="M0 2.500h5" stroke="#0c6a62" /><path d="M5 1h4.500v3.500H5z" fill="#0c6a62" />
            <path d="M6.500 5l3 4-3 4-3-4zM3 9h7" stroke="#222" />
          </Svg>
          <RedX soft />
        </div>
      </div>
    </div>
  );
}

export default function App() {
  return (
    <div className="relative flex min-h-screen flex-col bg-[#eeeff0] pr-[5px] pb-[5px] font-['Liberation_Sans',Arial,sans-serif] text-sm leading-4 text-black">
      <div className="flex flex-1 flex-col bg-[#e6e6e6]">
        <nav className="flex h-[23px] items-center gap-[9px] border-b border-[#808080] pl-1">
          {menus.map(([a, u, b]) => (
            <a key={a + u + b} href="#menu">{a}<span className="underline">{u}</span>{b}</a>
          ))}
        </nav>

        <div className="flex h-[35px] border-t border-b border-t-white border-b-[#808080]">
          <Group className="w-[52px] gap-[3px] border-l-0 pl-[7px]"><IconButton label="Zurück zur Suite" className="w-6"><BackIcon /></IconButton><DoubleChevron /></Group>
          <Group className="w-[112px] justify-center">
            <IconButton label="Neue Testsuite anlegen"><NewTestIcon /></IconButton>
            <IconButton label="Öffnen"><OpenIcon /></IconButton>
            <IconButton label="Speichern"><SaveIcon /></IconButton>
          </Group>
          <Group className="w-12 justify-center"><IconButton label="Neues Fenster"><NewWindowIcon /></IconButton></Group>
          <Group className="w-12 justify-center"><IconButton label="Drucken"><PrinterIcon /></IconButton></Group>
          <Group className="w-[46px] justify-center"><IconButton label="Rückgängig"><UndoIcon /></IconButton></Group>
          <Group className="w-12 justify-center"><IconButton label="Suchen"><SearchDocIcon /></IconButton></Group>
          <div className="flex flex-1 items-center border-r border-l border-white border-r-[#808080]">
            <IconButton label="Selenium starten" className="w-[41px]"><SeIcon /></IconButton>
            <IconButton label="Selenium stoppen" className="w-[41px]"><SeIcon stop /></IconButton>
            <div className="flex-1" />
            <IconButton label="Hilfe" className="w-[26px]"><HelpIcon /></IconButton>
          </div>
        </div>

        <div role="tablist" className="flex h-[25px] items-end">
          <button aria-label="Tab hinzufügen" className="flex h-6 w-6 items-center justify-center pr-[2px] pb-1">
            <Svg w={10} h={10}><path d="M3.500 0.500h3v3h3v3h-3v3h-3v-3h-3v-3h3z" fill="#ccc" stroke="#8c8c8c" /></Svg>
          </button>
          <button role="tab" aria-selected="false" className="h-[21px] w-[118px] border-t border-l border-[#8c8c8c] bg-[#f0f0f0] pb-[2px] text-center">Neue Testsuite</button>
          <div className="-mb-px -ml-px flex h-[25px] w-[105px] items-center justify-center gap-[7px] border-x border-t-3 border-[#8c8c8c] border-t-[#fdb52d] bg-[#e6e6e6] pb-1">
            <button role="tab" aria-selected="true">GuiBrowser</button>
            <button aria-label="Tab schließen"><CloseIcon /></button>
          </div>
        </div>

        <div className="ml-px flex flex-1 border border-[#8c8c8c]">
          <BrowserPanel />
          <div className="flex min-w-0 flex-1 flex-col">
            <div className="flex flex-1">
              <ActionPanel />
              <div className="pt-[5px]">
                <div className="flex h-[66px] w-[10px] items-center justify-center border-r border-b border-[#808080] bg-[#e6e6e6]">
                  <Svg w={6} h={60} crisp>
                    <path d="M5 0v8L1 4zM5 52v8l-4-4z" fill="#000" />
                    <path d="M4 11v38" stroke="#444" strokeWidth="2" strokeDasharray="2 2" />
                  </Svg>
                </div>
              </div>
              <Workspace />
            </div>
            <div className="mt-[2px] mr-[3px] mb-[3px] ml-3 flex h-[25px] items-center gap-[3px]">
              <button className="h-[22px] w-[119px] border border-t-white border-r-black border-b-black border-l-white pb-px whitespace-nowrap">Pfad überprüfen</button>
              <input aria-label="Pfad" className="h-full min-w-0 flex-1 border-t border-l border-[#808080] bg-white px-1 outline-none" />
            </div>
          </div>
        </div>

        <footer className="flex h-[26px] gap-px pt-px">
          <div className="flex w-[696px] items-center border border-white border-t-[#808080] border-l-transparent pl-1">Start Recording...</div>
          <div className="w-[6px] border border-white border-r-[#808080] border-b-[#808080]" />
          <div className="flex flex-1 items-center border border-white border-t-[#808080] border-l-[#808080] pl-[3px]">
            <span>sequence <b>[geändert]</b></span>
          </div>
          <div className="flex w-[25px] items-center justify-center border border-white border-t-[#808080] border-l-[#808080]"><Bulb /></div>
          <div className="mr-4 w-[26px] border border-white border-t-[#808080] border-l-[#808080]" />
        </footer>
      </div>

      <DeviceWindow />
      <svg className="pointer-events-none absolute top-[107px] left-[336px]" width="172" height="62" viewBox="0 0 172 62" aria-hidden="true">
        <path d="M2 2L170 59" stroke="#f00" strokeWidth="2" />
      </svg>
    </div>
  );
}
